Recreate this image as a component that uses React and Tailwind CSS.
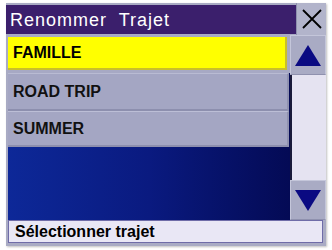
export default function App() {
  const font = { fontFamily: '"Liberation Sans", Arial, sans-serif' };
  return (
    <div className="w-[332px] h-[250px] bg-white pt-[3px] pl-[6px]" style={font}>
      <div className="w-[320px] h-[243px] bg-[#a9abc4] flex flex-col shadow-[1px_1px_2px_rgba(0,0,0,0.25)]">
        {/* header */}
        <div className="flex h-[32px]">
          <div className="w-[290px] mt-[2px] h-[29px] bg-[#3b1f6c] flex items-center pl-[4px] text-white text-[18px] tracking-[1px] leading-none">
            Renommer&nbsp; Trajet
          </div>
          <div className="flex-1 flex items-center justify-center bg-[#b2b4cb] border-l border-[#8e90ad]">
            <svg width="22" height="22" viewBox="0 0 22 22">
              <path d="M2 2 L20 20 M20 2 L2 20" stroke="#000" strokeWidth="1.8" fill="none" />
            </svg>
          </div>
        </div>
        {/* body */}
        <div className="flex h-[185px]">
          <div className="w-[282px] ml-[2px] flex flex-col bg-gradient-to-r from-[#0d2898] via-[#0a1a80] to-[#040a55]">
            <div className="h-[38px] bg-[#a7a9c4] pt-[2px] pr-[3px] pb-[3px]">
              <div className="h-[33px] bg-[#ffff00] border-b-2 border-r-2 border-[#c9bf2a] flex items-center pl-[5px] text-[16px] font-bold text-black">
                FAMILLE
              </div>
            </div>
            <div className="h-[38px] bg-[#a4a6c3] border-t border-[#b9bbd3] border-b-2 border-b-[#8d8fae] border-r-2 border-r-[#9092b0] mr-[1px] flex items-center pl-[5px] text-[16px] font-bold text-[#111]">
              ROAD TRIP
            </div>
            <div className="h-[36px] bg-[#a4a6c3] border-t border-[#bcbed6] border-b-2 border-b-[#8d8fae] border-r-2 border-r-[#9092b0] mr-[1px] flex items-center pl-[5px] text-[16px] font-bold text-[#111]">
              SUMMER
            </div>
            <div className="flex-1" />
          </div>
          <div className="flex-1 flex flex-col">
            <div className="h-[40px] bg-[#a9abc4] border border-[#c4c6da] border-b-[#8f91ae] flex items-center justify-center">
              <svg width="26" height="21" viewBox="0 0 26 21">
                <polygon points="13,0 26,21 0,21" fill="#0a0a82" />
              </svg>
            </div>
            <div className="flex-1 bg-[#e5e3f1] border-l-2 border-[#1a1a3a]" />
            <div className="h-[40px] bg-[#a9abc4] border border-[#c4c6da] border-b-[#8f91ae] flex items-center justify-center">
              <svg width="26" height="21" viewBox="0 0 26 21">
                <polygon points="0,0 26,0 13,21" fill="#0a0a82" />
              </svg>
            </div>
          </div>
        </div>
        {/* status bar */}
        <div className="ml-[2px] w-[315px] h-[23px] bg-[#e9e7f5] border border-[#6f6ca8] flex items-center pl-[6px] text-[16px] font-bold text-black leading-none">
          Sélectionner trajet
        </div>
      </div>
    </div>
  );
}
